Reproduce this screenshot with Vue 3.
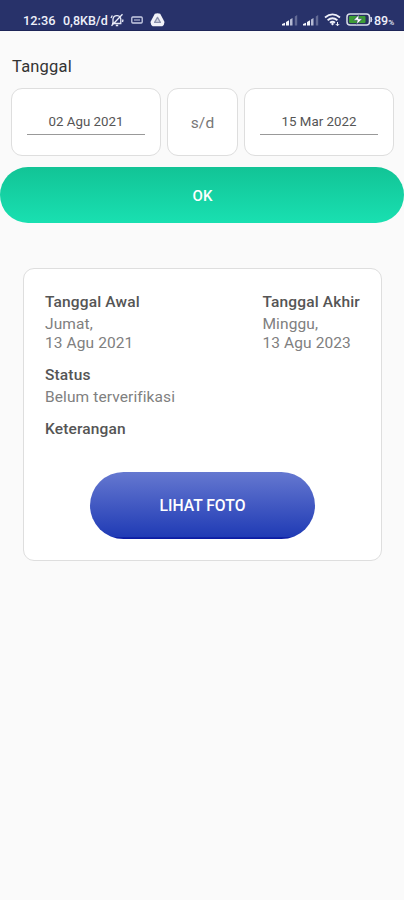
<template>
  <div class="page">
    <!-- status bar -->
    <div class="status-bar">
      <span class="clock">12:36</span>
      <span class="speed">0,8KB/d</span>
      <svg class="mute" width="14" height="14" viewBox="0 0 14 14" fill="none" stroke="#e8ebf8" stroke-width="1.3">
        <path d="M3 10.5V6.2C3.3 3.8 5 2.5 7.2 2.6C9.5 2.8 10.8 4.3 10.8 6.5V10.5H2M5.8 12.5H8.2M1.5 12.8L12.5 1.2M1 5L2.3 2.5M13 6.5L12.5 9" />
      </svg>
      <svg class="card-icon" width="12" height="8" viewBox="0 0 12 8" fill="none" stroke="#c9cee5" stroke-width="1.3">
        <rect x=".8" y="1" width="10.4" height="6" rx="1" />
        <path d="M3 4H9" stroke-width="1" />
      </svg>
      <svg class="drive" width="15" height="14" viewBox="0 0 15 14">
        <path d="M4.8.7Q7.5-.3 10.2.7L14.3 8.6Q14.8 11.5 12.3 13.3H2.7Q.2 11.5.7 8.6Z" fill="#f1f2f8" />
        <path d="M7.5 4.4L10.4 9.4H4.6Z" fill="#d5d8e4" stroke="#8b91ab" stroke-width="1.3" stroke-linejoin="round" />
      </svg>
      <div class="right-icons">
        <svg v-for="n in 2" :key="n" class="signal" width="16" height="12" viewBox="0 0 16 12">
          <path d="M0 11.5V10L3 8.8V11.5ZM4 11.5V8L7 6.2V11.5Z" fill="#f5f6fc" />
          <path d="M8 11.5V5.5L10.5 4V11.5Z" fill="#b5bad3" />
          <path d="M12.8 11.5V2.5L15.2 1V11.5Z" fill="#626a95" />
        </svg>
        <svg class="wifi" width="17" height="14" viewBox="0 0 17 14" fill="none" stroke="#eef0fa" stroke-width="1.8">
          <path d="M1 4.5Q8.5-1.7 16 4.5M3.6 7.2Q8.5 3.2 13.4 7.2M6 9.7Q8.5 7.8 11 9.7" />
          <path d="M8.5 9.3L10 11L8.5 12.6L7 11Z" fill="#eef0fa" stroke="none" />
          <path d="M13.5 9V12.5M11.8 11L13.5 12.8L15.2 11" stroke-width="1" />
        </svg>
        <svg class="battery" width="27" height="13" viewBox="0 0 27 13">
          <rect x="1" y="1" width="22.5" height="11" rx="3" fill="#27305f" stroke="#d9ddec" stroke-width="1.5" />
          <rect x="3" y="3" width="16.5" height="7" rx="1" fill="#3c9c35" />
          <path d="M25 4Q26.6 6.5 25 9Z" fill="#d9ddec" stroke="#d9ddec" />
          <path d="M13 1.7L7.5 7.2H11.3L10.7 11.3L16.5 5.8H12.5Z" fill="#fff" stroke="#27305f" stroke-width=".5" />
        </svg>
        <span class="percent">89<small>%</small></span>
      </div>
    </div>

    <!-- date filter -->
    <div class="filter-label">Tanggal</div>
    <div class="filter">
      <div class="box date-box"><div class="date-input">{{ startDate }}</div></div>
      <div class="box separator">s/d</div>
      <div class="box date-box"><div class="date-input">{{ endDate }}</div></div>
    </div>
    <button class="ok-btn">OK</button>

    <!-- request card -->
    <div class="card">
      <div class="dates">
        <div class="field">
          <h3>Tanggal Awal</h3>
          <p>Jumat,<br />13 Agu 2021</p>
        </div>
        <div class="field">
          <h3>Tanggal Akhir</h3>
          <p>Minggu,<br />13 Agu 2023</p>
        </div>
      </div>
      <div class="field status">
        <h3>Status</h3>
        <p>Belum terverifikasi</p>
      </div>
      <div class="field note">
        <h3>Keterangan</h3>
      </div>
      <button class="photo-btn">LIHAT FOTO</button>
    </div>
  </div>
</template>

<script setup>
import { ref } from 'vue'

const startDate = ref('02 Agu 2021')
const endDate = ref('15 Mar 2022')
</script>

<style>
body {
  background: #fafafa;
}
</style>

<style scoped>
.page {
  width: 404px;
  height: 900px;
  overflow: hidden;
  background: #fafafa;
  font-family: Roboto, sans-serif;
}

.status-bar {
  height: 31px;
  box-sizing: border-box;
  padding: 9px 10px 0 23px;
  display: flex;
  align-items: center;
  background: #28326a;
  border-bottom: 1px solid #1d2558;
  color: #eef0fa;
  font-size: 12.5px;
  font-weight: 500;
}

.clock {
  width: 40px;
  padding-top: 1px;
  font-size: 12.8px;
}

.speed {
  padding-top: 1px;
}

.mute {
  margin-left: 2px;
}

.card-icon {
  margin-left: 7px;
}

.drive {
  margin-left: 7px;
}

.right-icons {
  margin-left: auto;
  display: flex;
  align-items: center;
}

.signal {
  margin-right: 5px;
}

.wifi {
  margin-right: 5px;
}

.battery {
  margin-right: 1px;
}

.percent {
  width: 20px;
  padding-top: 1px;
  white-space: nowrap;
}

.percent small {
  font-size: 8px;
}

.filter-label {
  margin: 26px 0 0 12px;
  line-height: 20px;
  font-size: 16.5px;
  letter-spacing: 0.2px;
  color: #333;
}

.filter {
  display: flex;
  gap: 6px;
  margin: 11px 10px 0 11px;
}

.box {
  height: 68px;
  box-sizing: border-box;
  border: 1px solid #dedede;
  border-radius: 11px;
  background: #fff;
}

.date-box {
  flex: 1;
  padding: 23px 15px 0;
}

.date-input {
  padding-bottom: 2px;
  border-bottom: 1px solid #999;
  line-height: 20px;
  text-align: center;
  font-size: 13.3px;
  color: #555;
}

.separator {
  width: 71px;
  display: flex;
  align-items: center;
  justify-content: center;
  padding-top: 2px;
  font-size: 15.5px;
  letter-spacing: 0.2px;
  color: #777;
}

button {
  border: none;
  padding: 0;
  font-family: inherit;
  font-weight: 500;
  color: #fff;
  cursor: pointer;
}

.ok-btn {
  display: block;
  width: 100%;
  height: 56px;
  margin-top: 11px;
  padding: 2px 0 0 1px;
  border-radius: 28px;
  background: linear-gradient(#12c496, #19e0b1);
  font-size: 15px;
}

.card {
  width: 359px;
  height: 293px;
  box-sizing: border-box;
  margin: 45px 0 0 23px;
  padding: 23px 21px 0;
  border: 1px solid #dedede;
  border-radius: 11px;
  background: #fff;
}

.dates {
  display: flex;
  justify-content: space-between;
}

.field h3 {
  margin: 0;
  line-height: 20px;
  font-size: 15.5px;
  font-weight: 500;
  letter-spacing: 0.15px;
  color: #555;
}

.field p {
  margin: 3px 0 0;
  line-height: 18.5px;
  font-size: 15.5px;
  letter-spacing: 0.1px;
  color: #808080;
}

.status {
  margin-top: 13px;
}

.note {
  margin-top: 12px;
}

.photo-btn {
  display: block;
  width: 225px;
  height: 67px;
  margin: 33px auto 0;
  padding-top: 1px;
  border-radius: 34px;
  background: linear-gradient(#6578d0, #203bb5 97%, #0c1ca3 98%);
  font-size: 15.7px;
}
</style>
